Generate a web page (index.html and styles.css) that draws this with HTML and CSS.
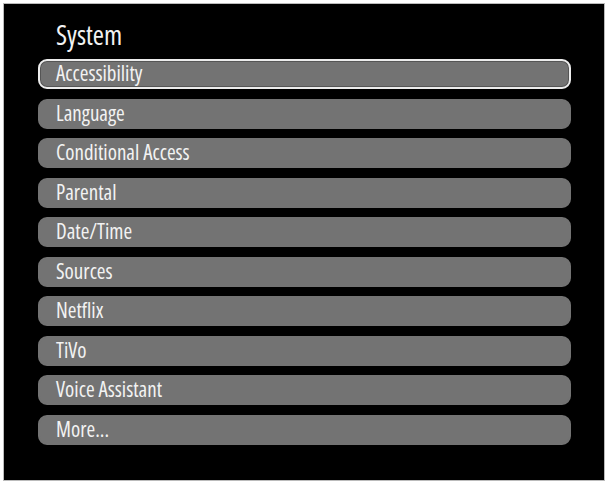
FILE: index.html
```html
<!doctype html>
<html lang="en">
<head>
  <title>System</title>
  <link rel="stylesheet" href="styles.css">
</head>
<body>
  <div id="screen">
    <div id="menu-title">System</div>
    <ul class="menu-list">
      <li class="selected">Accessibility</li>
      <li>Language</li>
      <li>Conditional Access</li>
      <li>Parental</li>
      <li>Date/Time</li>
      <li>Sources</li>
      <li>Netflix</li>
      <li>TiVo</li>
      <li>Voice Assistant</li>
      <li>More...</li>
    </ul>
  </div>
</body>
</html>
```

FILE: styles.css
```css
html, body {
  margin: 0;
  padding: 0;
  background: #fff;
  height: 100%;
  overflow: hidden;
}
#screen {
  box-sizing: border-box;
  height: 478px;
  margin: 3px 1px 3px 3px;
  padding: 16px 33px 0 34px;
  border: 1px solid #bbb;
  background: #000;
  color: #f2f2f2;
  font-family: "Open Sans", "DejaVu Sans Condensed", sans-serif;
  font-stretch: 75%;
}
#menu-title {
  font-size: 27px;
  line-height: 30px;
  padding-left: 18px;
  margin-bottom: 9px;
}
.menu-list {
  list-style-type: none;
  margin: 0;
  padding: 0;
  display: flex;
  flex-flow: column nowrap;
  gap: 9.5px;
}
.menu-list li {
  height: 30px;
  box-sizing: border-box;
  padding-left: 16px;
  border: 2px solid #737373;
  border-radius: 9px;
  background: #737373;
  font-size: 21px;
  font-weight: 500;
  line-height: 24px;
  white-space: nowrap;
}
.menu-list li.selected {
  border-color: #ececec;
  box-shadow: inset 0 0 0 1px #555;
}
```
